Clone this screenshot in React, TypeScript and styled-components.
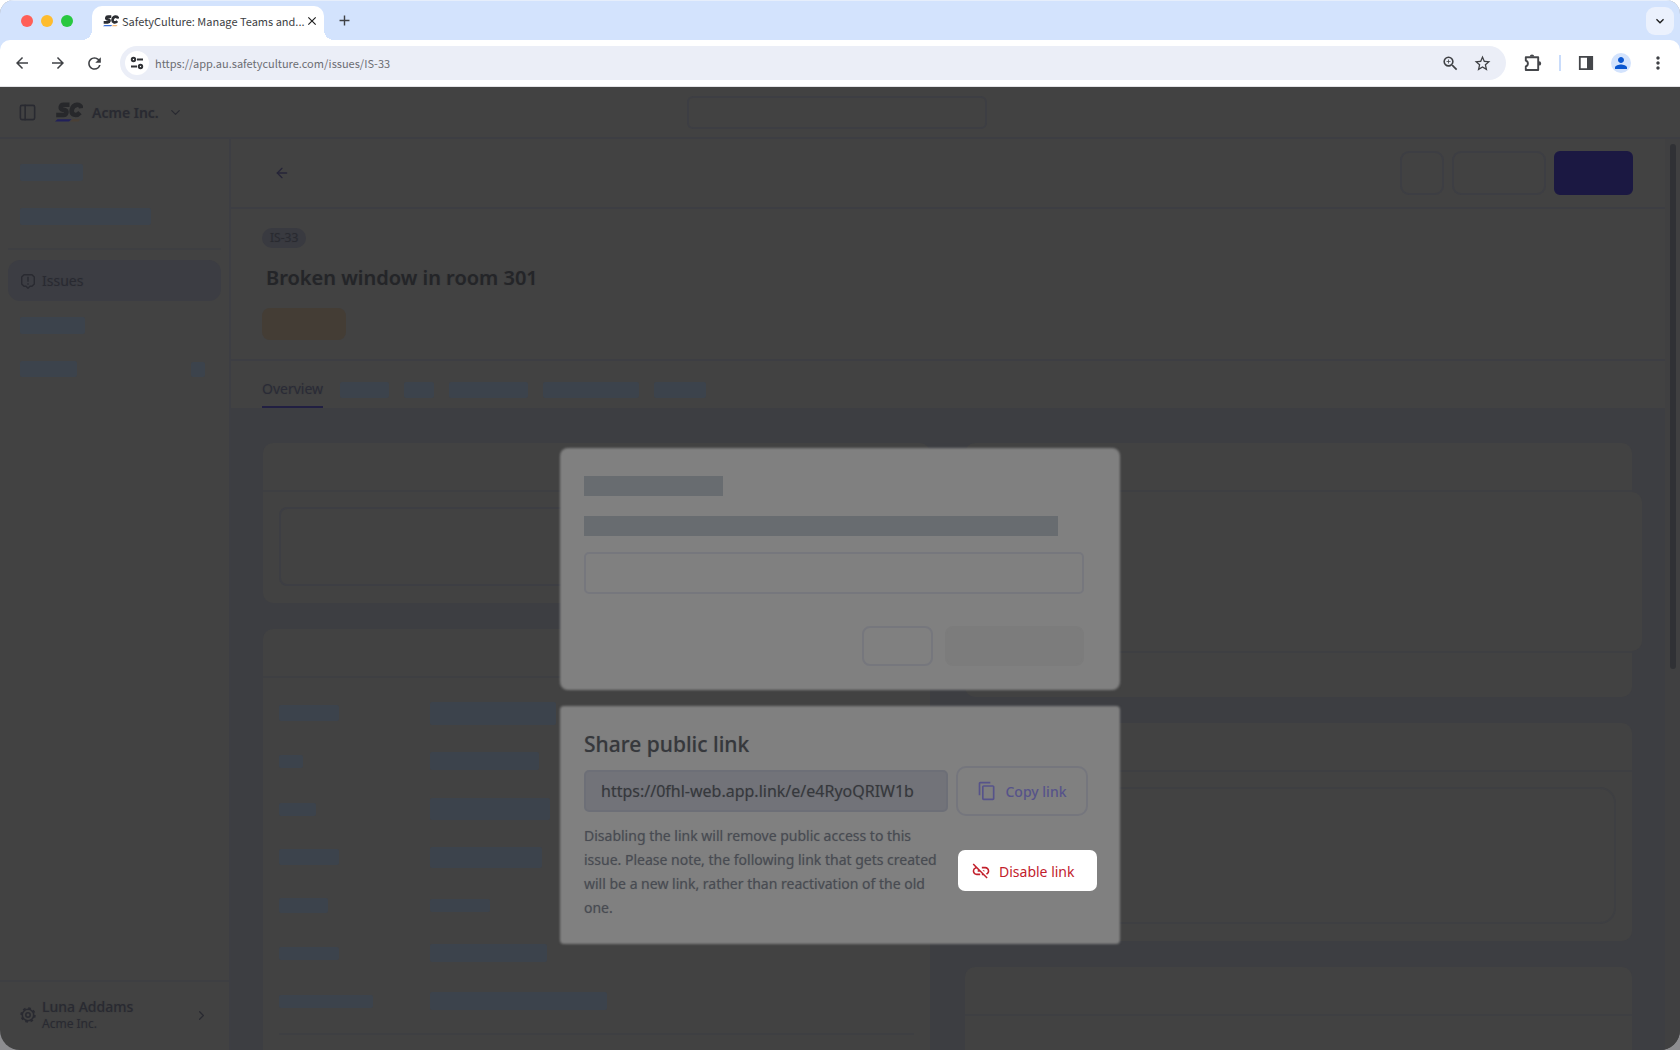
import React from "react";
import styled, { createGlobalStyle, css } from "styled-components";
import {
  MdArrowBack, MdArrowForward, MdRefresh, MdClose, MdAdd, MdKeyboardArrowDown,
  MdOutlineZoomIn, MdStarOutline, MdPerson, MdMoreVert, MdContentCopy, MdLinkOff,
} from "react-icons/md";
import { LuChevronDown, LuChevronRight, LuPanelLeft, LuArrowLeft } from "react-icons/lu";

const c = {
  page: "#424242",
  muted: "#3d3e42",
  line: "#3d3e43",
  faint: "#3e3f42",
  bar: "#3c434c",
  ink: "#27282b",
  inkSoft: "#292a31",
  violet: "#1b1842",
  sheet: "#808080",
  sheetLine: "#76777d",
  sheetBar: "#686c70",
  sheetText: "#484b52",
};

const Global = createGlobalStyle`
  *, *::before, *::after { box-sizing: border-box; }
  html, body { margin: 0; height: 100%; background: #fff; }
  body { font-family: "Noto Sans", "Liberation Sans", sans-serif; overflow: hidden; }
  button, input { font: inherit; margin: 0; }
  h1, h2, p { margin: 0; }
  svg { display: block; flex: none; }
`;

const softEdge = css`filter: blur(1px);`;
const softText = css`text-shadow: 0 0 1px rgba(40, 42, 52, 0.3);`;

const Window = styled.div`
  height: 100vh;
  display: flex;
  flex-direction: column;
  background: #8d8d90;
  border-radius: 14px 14px 0 0;
  overflow: hidden;
`;

/* Browser chrome */
const TabStrip = styled.div`
  flex: none;
  height: 40px;
  display: flex;
  align-items: flex-end;
  padding: 0 6px 0 21px;
  background: #d3e3fd;
  border-top: 1px solid #e6eefb;
`;
const Lights = styled.div`
  display: flex;
  gap: 8px;
  width: 71px;
  padding-bottom: 13px;
`;
const Light = styled.span<{ $color: string }>`
  width: 12px;
  height: 12px;
  border-radius: 50%;
  background: ${(p) => p.$color};
`;
const Tab = styled.div`
  position: relative;
  width: 232px;
  height: 34px;
  display: flex;
  align-items: center;
  padding: 0 8px 4px 11px;
  background: #fff;
  border-radius: 10px 10px 0 0;
  font: 11px/20px "Noto Sans CJK SC", "Noto Sans", sans-serif;
  color: #3c4043;
  white-space: nowrap;
  &::before, &::after {
    content: "";
    position: absolute;
    bottom: 0;
    width: 10px;
    height: 10px;
  }
  &::before { left: -10px; background: radial-gradient(circle at 0 0, transparent 10px, #fff 10px); }
  &::after { right: -10px; background: radial-gradient(circle at 100% 0, transparent 10px, #fff 10px); }
`;
const TabTitle = styled.span`
  margin-left: 3px;
`;
const PlainButton = styled.button`
  display: grid;
  place-items: center;
  padding: 0;
  border: 0;
  background: none;
  color: #3f4145;
`;
const NewTab = styled(PlainButton)`
  width: 40px;
  height: 39px;
`;
const TabSearch = styled(PlainButton)`
  margin: 0 0 5px auto;
  width: 28px;
  height: 28px;
  border-radius: 9px;
  background: #ebf1fd;
  color: #1f1f1f;
`;
const ToolbarBack = styled.div`
  flex: none;
  background: #d3e3fd;
`;
const Toolbar = styled.div`
  height: 47px;
  display: flex;
  align-items: center;
  padding: 0 12px 0 11px;
  background: #fff;
  border-radius: 10px 10px 0 0;
  border-bottom: 1px solid #e3e3e6;
`;
const Nav = styled.div`
  display: flex;
  gap: 14px;
  padding-right: 15px;
`;
const NavButton = styled(PlainButton)`
  width: 22px;
  height: 22px;
`;
const Omnibox = styled.div`
  flex: 1;
  height: 34px;
  display: flex;
  align-items: center;
  padding: 0 13px 0 5px;
  border-radius: 17px;
  background: #ebeef7;
`;
const SiteInfo = styled(PlainButton)`
  width: 24px;
  height: 24px;
  border-radius: 50%;
  background: #fff;
`;
const Address = styled.input`
  flex: 1;
  min-width: 0;
  padding: 0 6px;
  border: 0;
  outline: 0;
  background: none;
  color: #6b6d72;
  font: 11px/20px "Noto Sans CJK SC", "Noto Sans", sans-serif;
`;
const OmniButton = styled(PlainButton)`
  width: 22px;
  height: 22px;
  margin-left: 10px;
`;
const Tools = styled.div`
  display: flex;
  align-items: center;
  gap: 17px;
  padding-left: 18px;
`;
const ToolDivider = styled.span`
  width: 2px;
  height: 16px;
  background: #c9dcfb;
`;
const Avatar = styled(PlainButton)`
  width: 20px;
  height: 20px;
  border-radius: 50%;
  background: #d3e3fd;
  color: #0b57d0;
`;

/* Dimmed application */
const Viewport = styled.div`
  position: relative;
  flex: 1;
  min-height: 0;
  border-radius: 0 0 20px 20px;
  overflow: hidden;
  background: ${c.page};
`;
const AppShell = styled.div`
  height: 100%;
  display: flex;
  flex-direction: column;
  color: ${c.ink};
`;
const AppHeader = styled.header`
  flex: none;
  height: 52px;
  display: grid;
  grid-template-columns: 1fr 300px 1fr;
  align-items: center;
  padding: 0 24px 0 18px;
  border-bottom: 2px solid ${c.line};
`;
const Brand = styled.div`
  display: flex;
  align-items: center;
  gap: 9px;
  color: ${c.inkSoft};
  font-size: 14px;
  font-weight: 600;
  ${softText}
`;
const LogoSlot = styled.span`
  margin-left: 9px;
`;
const Search = styled.input`
  height: 33px;
  padding: 0 12px;
  border: 2px solid ${c.line};
  border-radius: 6px;
  background: none;
`;
const Body = styled.div`
  flex: 1;
  min-height: 0;
  display: flex;
`;
const Sidebar = styled.nav`
  width: 231px;
  flex: none;
  display: flex;
  flex-direction: column;
  border-right: 2px solid ${c.line};
`;
const NavList = styled.div`
  flex: 1;
  display: flex;
  flex-direction: column;
  padding: 11px 8px 12px;
`;
const NavItem = styled.div`
  height: 44px;
  display: flex;
  align-items: center;
  justify-content: space-between;
  padding: 0 16px 0 12px;
`;
const NavRule = styled.div`
  height: 2px;
  margin: 10px 0;
  background: ${c.faint};
`;
const ActiveNav = styled.a`
  height: 41px;
  display: flex;
  align-items: center;
  gap: 6px;
  margin-bottom: 2px;
  padding-left: 12px;
  border-radius: 12px;
  background: #3c3d43;
  color: ${c.inkSoft};
  font-size: 14px;
  text-decoration: none;
  ${softText}
`;
const Account = styled.button`
  height: 70px;
  display: flex;
  align-items: center;
  gap: 6px;
  padding: 0 20px 2px;
  border: 0;
  border-top: 2px solid ${c.faint};
  background: none;
  color: ${c.inkSoft};
  text-align: left;
  ${softText}
`;
const AccountText = styled.span`
  flex: 1;
  display: flex;
  flex-direction: column;
  font-size: 12px;
  line-height: 17px;
`;
const AccountName = styled.span`
  font-size: 14px;
  font-weight: 500;
`;
const Bar = styled.div<{ $w: number; $h?: number }>`
  width: ${(p) => p.$w}px;
  height: ${(p) => p.$h ?? 17}px;
  border-radius: 2px;
  background: ${c.bar};
`;
const Main = styled.main`
  flex: 1;
  min-width: 0;
  display: flex;
  flex-direction: column;
  overflow: hidden;
`;
const ActionRow = styled.div`
  flex: none;
  height: 70px;
  display: flex;
  align-items: center;
  gap: 8px;
  padding: 0 32px 0 42px;
  border-bottom: 2px solid ${c.line};
`;
const BackButton = styled(PlainButton)`
  margin-right: auto;
  width: 18px;
  height: 18px;
  color: #262538;
`;
const ActionButton = styled.button<{ $w: number; $solid?: boolean }>`
  width: ${(p) => p.$w}px;
  height: 44px;
  border: 2px solid ${(p) => (p.$solid ? c.violet : c.line)};
  border-radius: ${(p) => (p.$solid ? 6 : 9)}px;
  background: ${(p) => (p.$solid ? c.violet : "none")};
`;
const IssueHead = styled.div`
  flex: none;
  display: flex;
  flex-direction: column;
  align-items: flex-start;
  padding: 19px 31px;
  border-bottom: 2px solid ${c.line};
`;
const IssueId = styled.span`
  height: 20px;
  padding: 0 8px;
  border-radius: 10px;
  background: #393a40;
  color: #292a30;
  font-size: 12px;
  line-height: 20px;
  ${softText}
`;
const IssueTitle = styled.h1`
  margin: 16px 0;
  padding-left: 4px;
  font-size: 20px;
  line-height: 28px;
  font-weight: 600;
  color: #242528;
  ${softText}
`;
const Status = styled.span`
  width: 84px;
  height: 32px;
  border-radius: 8px;
  background: #443d35;
`;
const Tabs = styled.div`
  flex: none;
  height: 47px;
  display: flex;
  align-items: flex-end;
  gap: 17px;
  padding: 0 31px;
`;
const ActiveTab = styled.a`
  height: 38px;
  border-bottom: 2px solid #211f42;
  color: #2a2b36;
  font-size: 14px;
  line-height: 38px;
  text-decoration: none;
  ${softText}
`;
const TabBars = styled.div`
  display: flex;
  gap: 15px;
  padding-bottom: 10px;
`;
const Content = styled.div`
  flex: 1;
  min-height: 0;
  display: grid;
  grid-template-columns: 1fr 1fr;
  gap: 35px;
  padding: 35px 33px 0 32px;
  background: ${c.muted};
  overflow: hidden;
`;
const Column = styled.div`
  display: flex;
  flex-direction: column;
  gap: 26px;
`;
const Card = styled.section`
  flex: none;
  border-radius: 10px;
  background: ${c.page};
`;
const CardHead = styled.div`
  height: 49px;
  border-bottom: 2px solid ${c.faint};
`;
const CardBody = styled.div`
  padding: 15px 16px 17px;
`;
const Well = styled.div<{ $h: number; $faint?: boolean }>`
  height: ${(p) => p.$h}px;
  border: 2px solid ${(p) => (p.$faint ? c.faint : c.line)};
  border-radius: ${(p) => (p.$faint ? 16 : 8)}px;
`;
const Fields = styled.div`
  display: grid;
  grid-template-columns: 151px 1fr;
  grid-auto-rows: 48px;
  align-items: center;
  padding: 11px 0 8px;
  margin: 0 16px;
  border-bottom: 2px solid ${c.faint};
`;
const Spacer = styled.div`
  height: 60px;
`;
const MapPanel = styled.div`
  height: 159px;
  margin-right: -10px;
  border-radius: 0 10px 10px 0;
  background: ${c.page};
`;
const MapFoot = styled.div`
  height: 46px;
  border-top: 2px solid ${c.faint};
`;
const ScrollTrack = styled.div`
  flex: none;
  width: 15px;
  padding: 5px 4px 0 5px;
  background: #404041;
`;
const ScrollThumb = styled.div`
  height: 58%;
  border-radius: 3px;
  background: #303135;
`;

/* Dialogs */
const Layer = styled.div`
  position: absolute;
  inset: 0;
  display: flex;
  flex-direction: column;
  align-items: center;
  gap: 16px;
  padding-top: 361px;
`;
const Sheet = styled.section<{ $radius: number }>`
  position: relative;
  width: 560px;
  padding: 28px 24px 24px;
  color: ${c.sheetText};
  &::before {
    content: "";
    position: absolute;
    inset: 0;
    border-radius: ${(p) => p.$radius}px;
    background: ${c.sheet};
    ${softEdge}
  }
  > * { position: relative; }
`;
const SheetBar = styled.div<{ $w: number; $gap: number }>`
  width: ${(p) => p.$w}px;
  height: 20px;
  margin-bottom: ${(p) => p.$gap}px;
  background: ${c.sheetBar};
`;
const SheetInput = styled.input`
  display: block;
  width: 500px;
  height: 42px;
  padding: 0 12px;
  border: 2px solid ${c.sheetLine};
  border-radius: 5px;
  background: none;
`;
const SheetActions = styled.div`
  display: flex;
  justify-content: flex-end;
  gap: 12px;
  width: 500px;
  padding-top: 32px;
`;
const SheetButton = styled.button<{ $w: number; $quiet?: boolean }>`
  width: ${(p) => p.$w}px;
  height: 40px;
  border: 2px solid ${(p) => (p.$quiet ? "#7c7c7c" : c.sheetLine)};
  border-radius: 8px;
  background: ${(p) => (p.$quiet ? "#7c7c7c" : "none")};
`;
const ShareSheet = styled(Sheet)`
  padding: 24px 23px 24px 24px;
`;
const ShareTitle = styled.h2`
  color: #36383c;
  font-size: 21px;
  line-height: 28px;
  font-weight: 500;
  ${softText}
`;
const LinkRow = styled.div`
  display: flex;
  align-items: center;
  gap: 8px;
  padding: 8px 0;
`;
const LinkField = styled.input`
  width: 364px;
  height: 42px;
  padding: 0 15px;
  border: 2px solid #6d6f77;
  border-radius: 5px;
  background: #727379;
  color: #36383c;
  font-size: 16px;
  ${softText}
`;
const CopyButton = styled.button`
  width: 132px;
  height: 50px;
  display: flex;
  align-items: center;
  justify-content: center;
  gap: 8px;
  padding: 0;
  border: 2px solid #75767d;
  border-radius: 10px;
  background: none;
  color: #56538a;
  font-size: 14px;
  font-weight: 500;
`;
const DisableRow = styled.div`
  display: flex;
  align-items: center;
  gap: 10px;
`;
const Note = styled.p`
  width: 364px;
  font-size: 14px;
  line-height: 24px;
  ${softText}
`;
const DisableButton = styled.button`
  flex: 1;
  height: 41px;
  display: flex;
  align-items: center;
  gap: 8px;
  margin-bottom: 4px;
  padding: 2px 13px 0;
  border: 0;
  border-radius: 7px;
  background: #fff;
  color: #c2202c;
  font-size: 14px;
`;

const Logo = ({ size, ink, blue, gold }: { size: number; ink: string; blue: string; gold: string }) => (
  <svg width={size} height={(size * 20) / 28} viewBox="0 0 28 20" fill="none" role="img" aria-label="SafetyCulture">
    <path d="M14.500 2.800H8.600C5.200 2.800 4.800 7.300 7.600 7.700l2 .3c3 .4 2.200 5-1.200 5H1.200" stroke={ink} strokeWidth="4.600" />
    <path d="M26.300 6.200C25.600 1.500 18.500 1.600 17 7.200c-1.500 5.800 4.200 7.600 8 3.400" stroke={ink} strokeWidth="4.600" />
    <path d="M0 19.500L2.500 17.300h14l-2.500 2.200z" fill={blue} />
    <path d="M15 19.500l2.500-2.200h8L23.500 19.500z" fill={gold} />
  </svg>
);

const TuneIcon = () => (
  <svg width="14" height="14" viewBox="0 0 14 14" fill="none" stroke="#303236" strokeWidth="2">
    <circle cx="3.500" cy="3.500" r="1.700" />
    <path d="M7 3.500h6M1 10.500h6" />
    <circle cx="10.500" cy="10.500" r="1.700" />
  </svg>
);

const PuzzleIcon = () => (
  <svg width="18" height="18" viewBox="0 0 18 18" fill="#44464a">
    <path d="M1.800 3.200h12.400v12.800H1.800V12.500c2.800-.8 2.800-5 0-5.800z" fill="none" stroke="#44464a" strokeWidth="1.900" strokeLinejoin="round" />
    <path d="M5.800 2.600a2.200 2.200 0 0 1 4.400 0zM15 7.200a2.200 2.200 0 0 1 0 4.400z" />
  </svg>
);

const PanelIcon = () => (
  <svg width="16" height="16" viewBox="0 0 16 16">
    <path d="M1.800 1.800h12.400v12.400H1.800z" fill="none" stroke="#44464a" strokeWidth="1.800" />
    <path d="M9 1h6v14H9z" fill="#44464a" />
  </svg>
);

const IssueIcon = () => (
  <svg width="16" height="16" viewBox="0 0 16 16" fill="none" stroke="currentColor" strokeWidth="1.400">
    <path d="M4 1.700h8l2.300 2.300v7L12 13.300h-2L8 15.200l-2-1.900H4L1.700 11V4z" strokeLinejoin="round" />
    <path d="M8 3.800v5M8 10.300v1.500" />
  </svg>
);

const GearIcon = () => (
  <svg width="16" height="16" viewBox="0 0 16 16" fill="none" stroke="currentColor">
    <circle cx="8" cy="8" r="5.700" strokeWidth="1.500" />
    <circle cx="8" cy="8" r="6.900" strokeWidth="1.600" strokeDasharray="2.700 2.720" />
    <circle cx="8" cy="8" r="2.200" strokeWidth="1.500" />
  </svg>
);

const fields: [number, number, number, number][] = [
  [60, 16, 126, 23],
  [24, 13, 109, 18],
  [37, 13, 120, 22],
  [60, 16, 112, 21],
  [49, 15, 60, 13],
  [60, 13, 117, 18],
  [94, 13, 177, 18],
];

export default function App() {
  return (
    <Window>
      <Global />
      <TabStrip>
        <Lights>
          <Light $color="#ff5f57" />
          <Light $color="#febc2e" />
          <Light $color="#28c840" />
        </Lights>
        <Tab>
          <Logo size={16} ink="#2c2e33" blue="#3b6fd8" gold="#f3b877" />
          <TabTitle>SafetyCulture: Manage Teams and...</TabTitle>
          <PlainButton aria-label="Close tab"><MdClose size={14} color="#1f1f1f" /></PlainButton>
        </Tab>
        <NewTab aria-label="New tab"><MdAdd size={17} /></NewTab>
        <TabSearch aria-label="Search tabs"><MdKeyboardArrowDown size={16} /></TabSearch>
      </TabStrip>
      <ToolbarBack>
        <Toolbar>
          <Nav>
            <NavButton aria-label="Back"><MdArrowBack size={18} /></NavButton>
            <NavButton aria-label="Forward"><MdArrowForward size={18} /></NavButton>
            <NavButton aria-label="Reload"><MdRefresh size={19} /></NavButton>
          </Nav>
          <Omnibox>
            <SiteInfo aria-label="Site information"><TuneIcon /></SiteInfo>
            <Address aria-label="Address" defaultValue="https://app.au.safetyculture.com/issues/IS-33" />
            <OmniButton aria-label="Zoom"><MdOutlineZoomIn size={19} /></OmniButton>
            <OmniButton aria-label="Bookmark"><MdStarOutline size={19} /></OmniButton>
          </Omnibox>
          <Tools>
            <PlainButton aria-label="Extensions"><PuzzleIcon /></PlainButton>
            <ToolDivider />
            <PlainButton aria-label="Side panel"><PanelIcon /></PlainButton>
            <Avatar aria-label="Profile"><MdPerson size={18} /></Avatar>
            <PlainButton aria-label="Menu"><MdMoreVert size={20} /></PlainButton>
          </Tools>
        </Toolbar>
      </ToolbarBack>

      <Viewport>
        <AppShell>
          <AppHeader>
            <Brand>
              <LuPanelLeft size={19} />
              <LogoSlot><Logo size={28} ink="#27282b" blue="#21205a" gold="#4a4036" /></LogoSlot>
              <span>Acme Inc.</span>
              <LuChevronDown size={15} />
            </Brand>
            <Search aria-label="Search" />
          </AppHeader>
          <Body>
            <Sidebar>
              <NavList>
                <NavItem><Bar $w={63} /></NavItem>
                <NavItem><Bar $w={131} /></NavItem>
                <NavRule />
                <ActiveNav href="#issues"><IssueIcon /><span>Issues</span></ActiveNav>
                <NavItem><Bar $w={65} /></NavItem>
                <NavItem><Bar $w={57} $h={16} /><Bar $w={14} $h={15} /></NavItem>
              </NavList>
              <Account>
                <GearIcon />
                <AccountText>
                  <AccountName>Luna Addams</AccountName>
                  Acme Inc.
                </AccountText>
                <LuChevronRight size={15} />
              </Account>
            </Sidebar>
            <Main>
              <ActionRow>
                <BackButton aria-label="Back to issues"><LuArrowLeft size={16} strokeWidth={2} /></BackButton>
                <ActionButton $w={44} aria-label="More" />
                <ActionButton $w={94} aria-label="Secondary action" />
                <ActionButton $w={79} $solid aria-label="Primary action" />
              </ActionRow>
              <IssueHead>
                <IssueId>IS-33</IssueId>
                <IssueTitle>Broken window in room 301</IssueTitle>
                <Status />
              </IssueHead>
              <Tabs>
                <ActiveTab href="#overview">Overview</ActiveTab>
                <TabBars>
                  {[49, 30, 79, 96, 52].map((w, i) => <Bar key={i} $w={w} $h={16} />)}
                </TabBars>
              </Tabs>
              <Content>
                <Column>
                  <Card>
                    <CardHead />
                    <CardBody><Well $h={79} /></CardBody>
                  </Card>
                  <Card>
                    <CardHead />
                    <Fields>
                      {fields.map(([lw, lh, vw, vh], i) => (
                        <React.Fragment key={i}>
                          <Bar $w={lw} $h={lh} />
                          <Bar $w={vw} $h={vh} />
                        </React.Fragment>
                      ))}
                    </Fields>
                    <Spacer />
                  </Card>
                </Column>
                <Column>
                  <Card>
                    <CardHead />
                    <MapPanel />
                    <MapFoot />
                  </Card>
                  <Card>
                    <CardHead />
                    <CardBody><Well $h={137} $faint /></CardBody>
                  </Card>
                  <Card>
                    <CardHead />
                    <Spacer />
                  </Card>
                </Column>
              </Content>
            </Main>
            <ScrollTrack><ScrollThumb /></ScrollTrack>
          </Body>
        </AppShell>

        <Layer>
          <Sheet $radius={8}>
            <SheetBar $w={139} $gap={20} />
            <SheetBar $w={474} $gap={16} />
            <SheetInput aria-label="Recipient" />
            <SheetActions>
              <SheetButton $w={71} aria-label="Cancel" />
              <SheetButton $w={139} $quiet aria-label="Send" />
            </SheetActions>
          </Sheet>
          <ShareSheet $radius={4}>
            <ShareTitle>Share public link</ShareTitle>
            <LinkRow>
              <LinkField aria-label="Public link" readOnly value="https://0fhl-web.app.link/e/e4RyoQRIW1b" />
              <CopyButton><MdContentCopy size={20} />Copy link</CopyButton>
            </LinkRow>
            <DisableRow>
              <Note>
                Disabling the link will remove public access to this issue. Please note, the following link
                that gets created will be a new link, rather than reactivation of the old one.
              </Note>
              <DisableButton><MdLinkOff size={20} />Disable link</DisableButton>
            </DisableRow>
          </ShareSheet>
        </Layer>
      </Viewport>
    </Window>
  );
}
